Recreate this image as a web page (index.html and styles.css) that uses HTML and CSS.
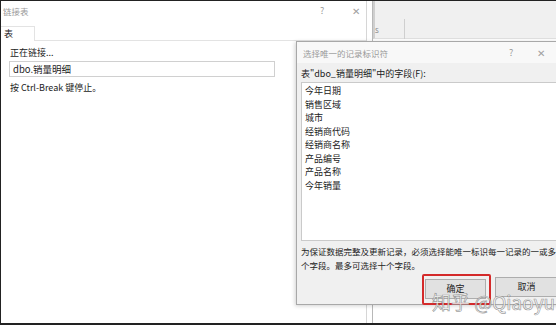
FILE: index.html
```html
<!DOCTYPE html>
<html lang="zh-CN">
<head>
    <meta charset="UTF-8">
    <title>链接表</title>
    <link rel="stylesheet" href="styles.css">
</head>
<body>
<div class="screen">
    <div class="win link-win">
        <div class="titlebar">
            <span class="title">链接表</span>
            <span class="help">?</span>
            <span class="close">✕</span>
        </div>
        <div class="tabs">
            <div class="tab">表</div>
        </div>
        <div class="link-body">
            <div class="line">正在链接...</div>
            <div class="input">dbo.销量明细</div>
            <div class="line">按 Ctrl-Break 键停止。</div>
        </div>
    </div>

    <div class="back-win">
        <div class="back-bar">
            <span class="back-s">s</span>
            <span class="back-sep"></span>
        </div>
    </div>

    <div class="win pick-win">
        <div class="titlebar pick-title">
            <span class="title">选择唯一的记录标识符</span>
            <span class="help">?</span>
            <span class="close">✕</span>
        </div>
        <div class="pick-body">
            <div class="label">表"dbo_销量明细"中的字段(F):</div>
            <ul class="list">
                <li>今年日期</li>
                <li>销售区域</li>
                <li>城市</li>
                <li>经销商代码</li>
                <li>经销商名称</li>
                <li>产品编号</li>
                <li>产品名称</li>
                <li>今年销量</li>
            </ul>
            <p class="note">为保证数据完整及更新记录，必须选择能唯一标识每一记录的一或多个字段。最多可选择十个字段。</p>
            <div class="buttons">
                <div class="btn-mark"><div class="btn">确定</div></div>
                <div class="btn">取消</div>
            </div>
        </div>
    </div>

    <div class="watermark">知乎 @Qiaoyu</div>
</div>
</body>
</html>
```

FILE: styles.css
```css
*{
    margin: 0;
    padding: 0;
    box-sizing: border-box;
    list-style: none;
}
html,body{
    width: 556px;
    height: 326px;
    overflow: hidden;
    background: #fff;
    font-family: "Noto Sans CJK SC", "Liberation Sans", sans-serif;
    color: #222;
}
.screen{
    position: relative;
    width: 556px;
    height: 325px;
    border-left: 1px solid #222;
    border-top: 1px solid #222;
    border-bottom: 2px solid #222;
    overflow: hidden;
}
.win{
    position: absolute;
    background: #fff;
}
.titlebar{
    display: flex;
    align-items: center;
    height: 25px;
    padding: 0 0 6px 2px;
    font-size: 8.5px;
    color: #9a9a9a;
}
.titlebar .title{
    flex: 1;
}
.titlebar .help{
    width: 32px;
    font-size: 9px;
}
.titlebar .close{
    width: 14px;
    font-size: 10px;
    color: #a0a0a0;
}

/* 链接表 */
.link-win{
    left: 0;
    top: 0;
    width: 366px;
    height: 324px;
    border-right: 1px solid #d6d6d6;
}
.tabs{
    height: 15px;
    border-bottom: 1px solid #e3e3e3;
}
.tab{
    width: 34px;
    height: 15px;
    padding-left: 3px;
    font-size: 9px;
    line-height: 14px;
    background: #fff;
    border: 1px solid #e3e3e3;
    border-left: none;
    border-bottom: none;
}
.link-body{
    padding: 5px 0 0 8px;
    font-size: 9px;
}
.link-body .line{
    height: 13px;
    line-height: 13px;
    padding-left: 1px;
}
.input{
    width: 266px;
    height: 16px;
    margin: 2px 0 4px;
    padding-left: 3px;
    line-height: 14px;
    font-size: 9.5px;
    border: 1px solid #d0d0d0;
}

/* 后面的窗口 */
.back-win{
    position: absolute;
    left: 371px;
    top: 0;
    width: 190px;
    height: 324px;
    border-left: 1px solid #b8b8b8;
}
.back-bar{
    position: relative;
    height: 38px;
    background: #f0f0f0;
    border-bottom: 1px solid #e0e0e0;
    border-left: 2px solid #cfcfcf;
}
.back-s{
    position: absolute;
    left: 0;
    top: 23px;
    font-size: 8px;
    color: #888;
}
.back-sep{
    position: absolute;
    left: 29px;
    top: 18px;
    width: 1px;
    height: 20px;
    background: #cfcfcf;
}

/* 选择唯一的记录标识符 */
.pick-win{
    left: 295px;
    top: 40px;
    width: 280px;
    height: 264px;
    background: #f0f0f0;
    border: 1px solid #a8a8a8;
    box-shadow: -1px 1px 4px rgba(0,0,0,0.18);
}
.pick-title{
    height: 21px;
    padding: 0 0 0 6px;
    background: #f8f8f8;
}
.pick-title .help{
    width: 28px;
}
.pick-title .close{
    width: 38px;
}
.pick-body{
    padding: 3px 0 0 4px;
    font-size: 9px;
}
.label{
    height: 16px;
    line-height: 16px;
}
.list{
    height: 159px;
    padding: 1px 0 0 3px;
    background: #fff;
    border: 1px solid #cacaca;
}
.list li{
    height: 13.5px;
    line-height: 13.5px;
}
.note{
    width: 258px;
    margin-top: 3px;
    font-size: 8.5px;
    line-height: 14px;
}
.buttons{
    display: flex;
    gap: 4px;
    margin: 5px 0 0 121px;
}
.btn-mark{
    margin-top: -3px;
    padding: 3px 3px 4px 1px;
    border: 2px solid #d42a2a;
    border-radius: 2px;
}
.btn{
    width: 63px;
    height: 20px;
    line-height: 18px;
    text-align: center;
    font-size: 9px;
    background: #e1e1e1;
    border: 1px solid #adadad;
}
.btn-mark .btn{
    width: 61px;
}

.watermark{
    position: absolute;
    left: 431px;
    top: 287px;
    white-space: nowrap;
    font-size: 19px;
    color: rgba(255,255,255,0.85);
    -webkit-text-stroke: 0.7px rgba(90,90,90,0.6);
}
```
